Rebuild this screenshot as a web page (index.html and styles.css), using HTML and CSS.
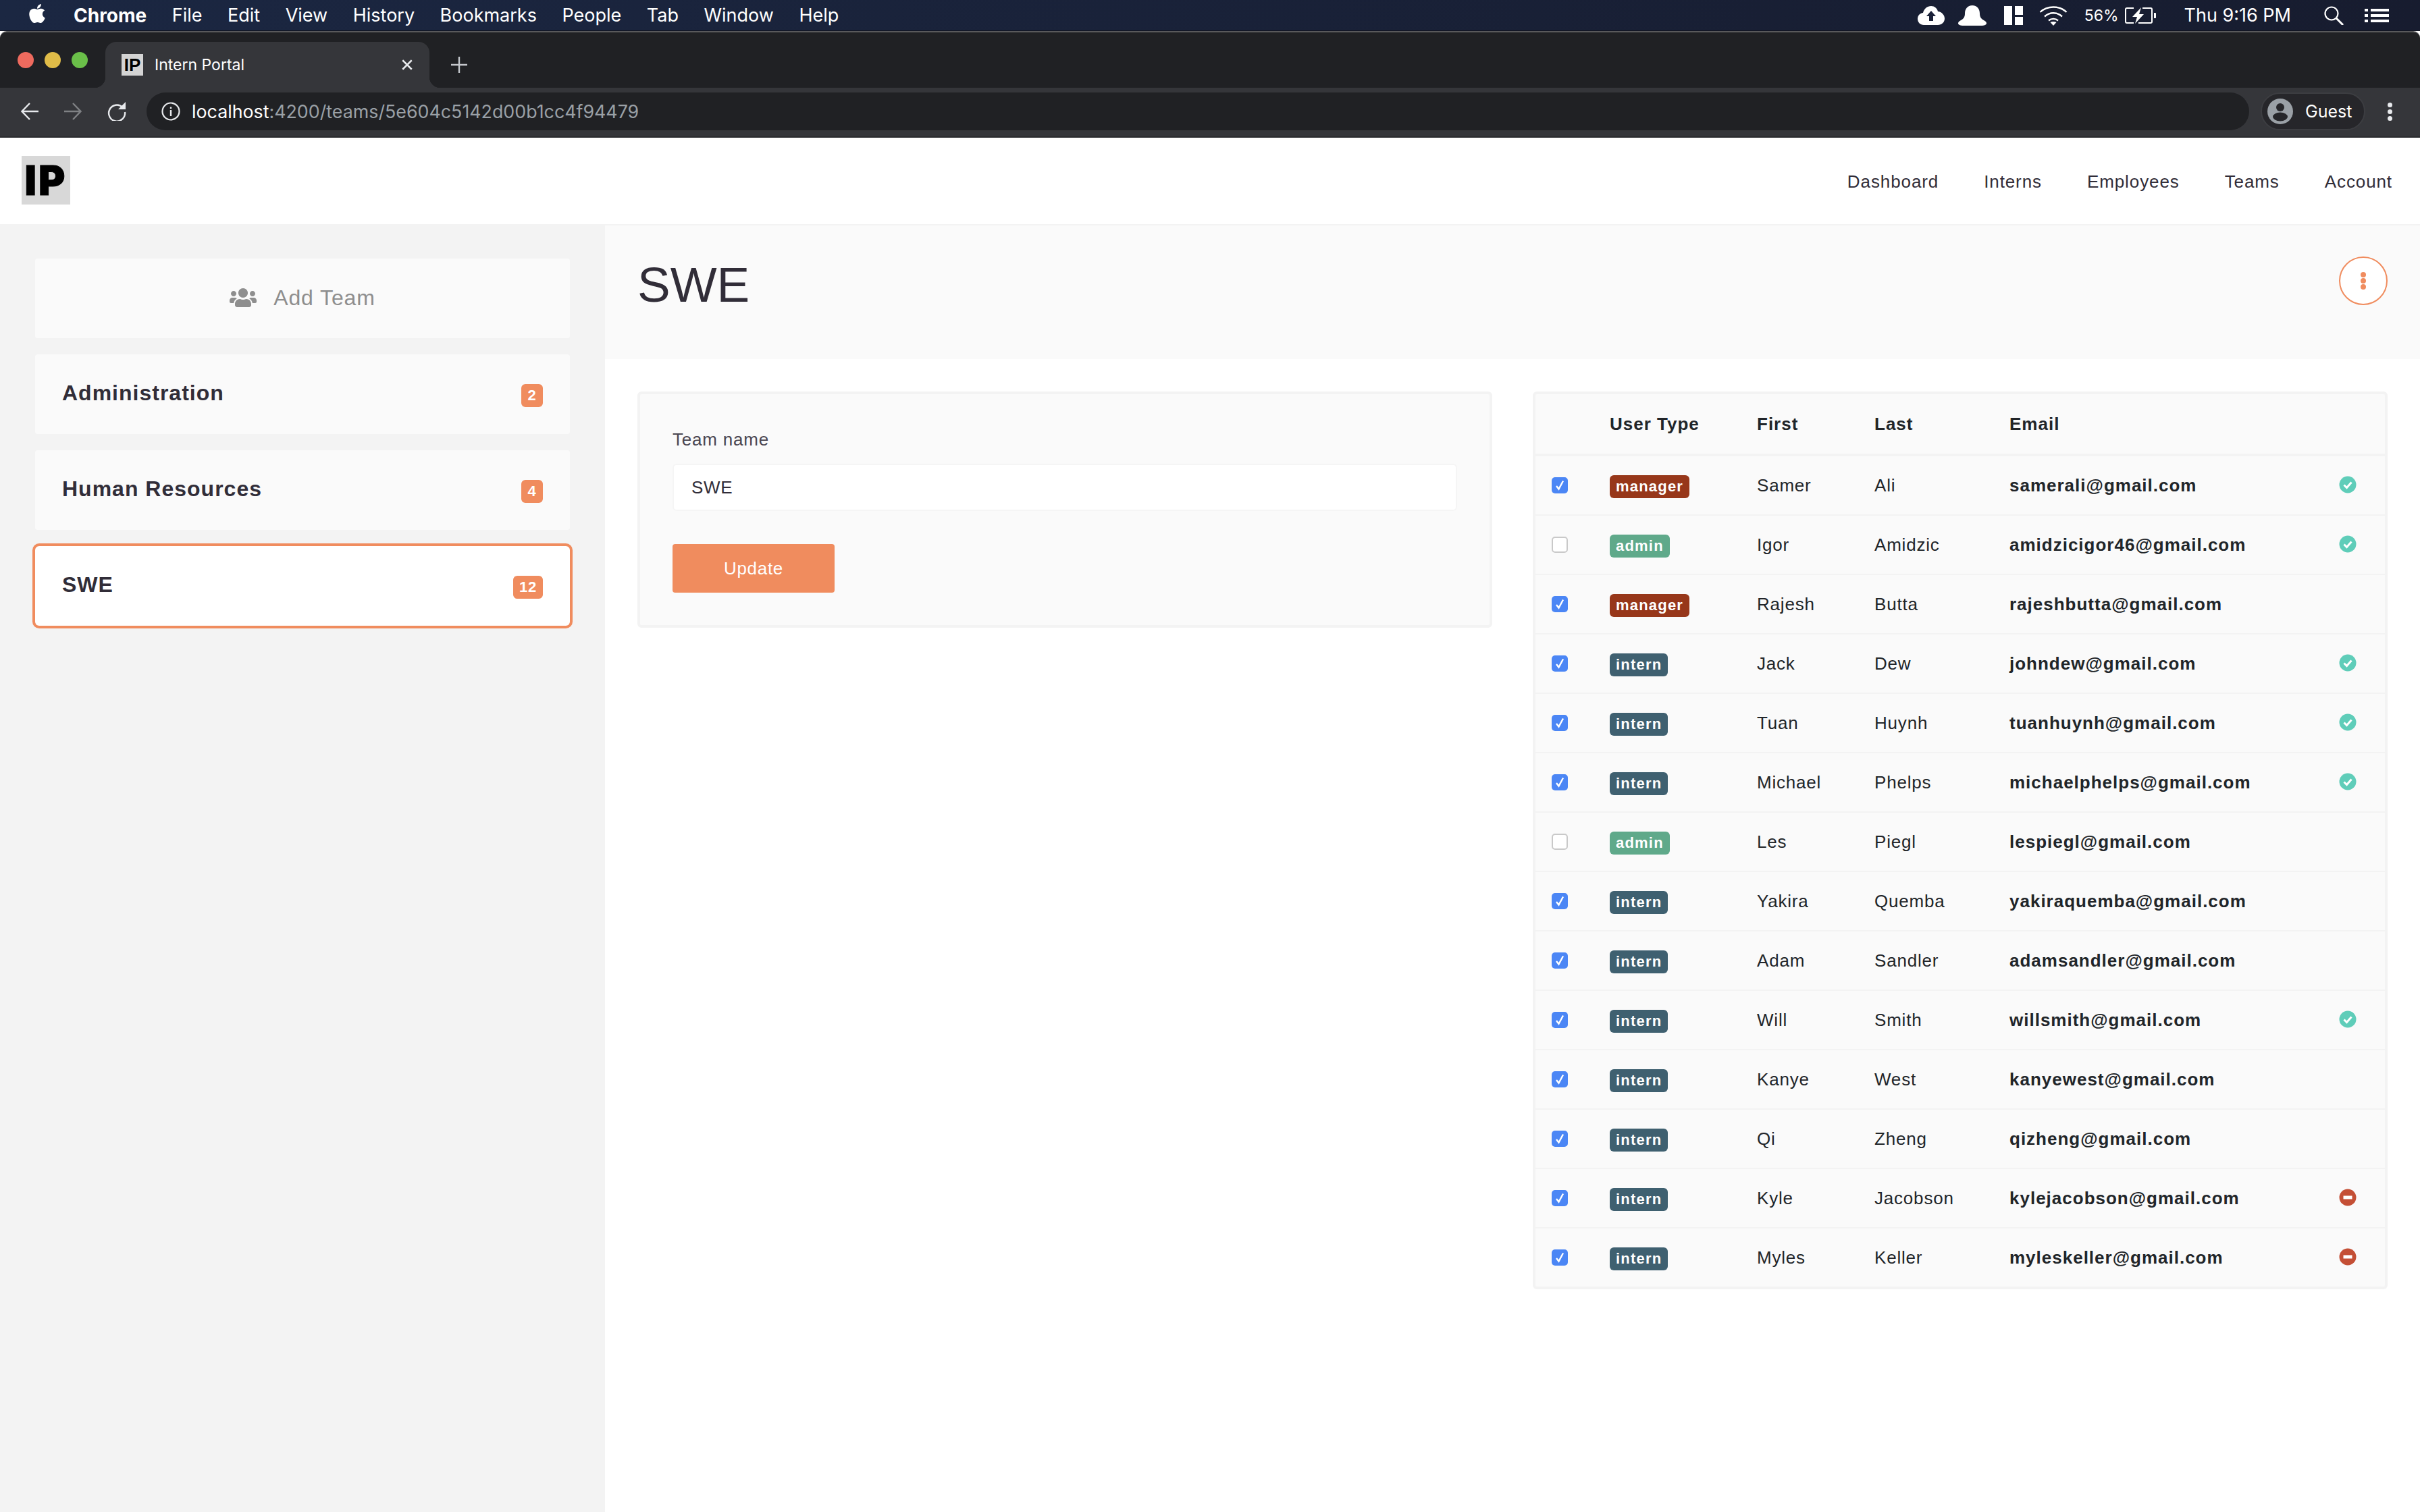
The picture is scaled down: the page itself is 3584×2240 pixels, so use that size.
FILE: index.html
```html
<!DOCTYPE html>
<html lang="en">
<head>
    <meta charset="UTF-8">
    <meta name="viewport" content="width=device-width, initial-scale=1.0">
    <title>Intern Portal</title>
    <link rel="stylesheet" href="styles.css">
</head>
<body>
    <svg class="defs" width="0" height="0">
        <symbol id="tick" viewBox="0 0 24 24"><path d="M7 13l3.5 4.5L17 5.5" fill="none" stroke="#fff" stroke-width="2.4"/></symbol>
        <symbol id="ok" viewBox="0 0 26 26"><circle cx="13" cy="13" r="12.5" fill="#5fcdb9"/><path d="M7.5 13.5l4 4 7-8" fill="none" stroke="#fff" stroke-width="3"/></symbol>
        <symbol id="no" viewBox="0 0 26 26"><circle cx="13" cy="13" r="12.5" fill="#c44f35"/><rect x="6.5" y="10.5" width="13" height="5" fill="#fff"/></symbol>
    </svg>

    <!-- mac menu bar -->
    <div class="menubar">
        <svg class="apple" viewBox="0 0 384 512" width="26" height="32"><path fill="#fff" d="M318.7 268.7c-.2-36.7 16.4-64.4 50-84.8-18.8-26.9-47.2-41.7-84.7-44.6-35.5-2.8-74.3 20.7-88.5 20.7-15 0-49.4-19.7-76.4-19.7C63.3 141.2 4 184.8 4 273.5q0 39.3 14.4 81.2c12.8 36.7 59 126.7 107.2 125.2 25.2-.6 43-17.9 75.8-17.9 31.8 0 48.3 17.9 76.4 17.9 48.6-.7 90.4-82.5 102.6-119.3-65.2-30.7-61.7-90-61.7-91.9zm-56.6-164.2c27.3-32.4 24.8-61.9 24-72.5-24.1 1.4-52 16.4-67.9 34.9-17.5 19.8-27.8 44.3-25.6 71.9 26.1 2 49.9-11.4 69.5-34.3z"/></svg>
        <nav class="menu">
            <b>Chrome</b><span>File</span><span>Edit</span><span>View</span><span>History</span><span>Bookmarks</span><span>People</span><span>Tab</span><span>Window</span><span>Help</span>
        </nav>
        <div class="status">
            <svg class="st-cloud" viewBox="0 0 40 28" width="40" height="28"><path fill="#fff" d="M20 0c5 0 9 3.500 10 8 5.500 .5 10 5 10 10.500S35.500 28 30 28H9C4 28 0 24 0 19s3.500-8.500 8-9C9.500 4 14 0 20 0z"/><path fill="#1a2138" d="M20 7l7 8h-4v7h-6v-7h-4z"/></svg>
            <svg class="st-bell" viewBox="0 0 42 30" width="42" height="30"><path fill="#fff" d="M21 0c7 0 11 5 11 12 0 5 2 8 6 10 3 1.500 4 3 4 4.500 0 2-3 3.500-8 3.500H8c-5 0-8-1.500-8-3.500 0-1.500 1-3 4-4.500 4-2 6-5 6-10C10 5 14 0 21 0z"/></svg>
            <svg class="st-dash" viewBox="0 0 28 28" width="28" height="28"><path fill="#fff" d="M0 0h12v28H0zM16 0h12v13H16zM16 16h12v12H16z"/></svg>
            <svg class="st-wifi" viewBox="0 0 42 30" width="42" height="30" fill="none" stroke="#fff" stroke-width="2.400"><path d="M1.500 10C12 0 30 0 40.500 10"/><path d="M8 16.500c7.500-7 18.500-7 26 0"/><path d="M14 22.500c4-3.500 10-3.500 14 0"/><path fill="#fff" stroke="none" d="M21 30l-4.500-5c2.500-1.500 6.500-1.500 9 0z"/></svg>
            <span class="st-pct">56%</span>
            <svg class="st-batt" viewBox="0 0 46 24" width="46" height="24"><path fill="none" stroke="#fff" stroke-width="2" d="M13 1H3Q1 1 1 3v18q0 2 2 2h10M26 1h12q2 0 2 2v18q0 2-2 2H20"/><path fill="#fff" d="M24 0L11 14h7l-3 10 13-14h-7zM43 8h2a1 1 0 0 1 1 1v6a1 1 0 0 1-1 1h-2z"/></svg>
            <span class="st-time">Thu 9:16 PM</span>
            <svg class="st-search" viewBox="0 0 30 28" width="30" height="28" fill="none" stroke="#fff" stroke-width="2.200"><circle cx="11" cy="11" r="9.500"/><path stroke-width="3" d="M18 18l10 10"/></svg>
            <svg class="st-list" viewBox="0 0 36 20" width="36" height="20"><path fill="#fff" d="M0 0h5v4H0zM9 0h27v4H9zM0 8h5v4H0zM9 8h27v4H9zM0 16h5v4H0zM9 16h27v4H9z"/></svg>
        </div>
    </div>

    <!-- browser chrome -->
    <div class="tabstrip">
        <div class="lights"><i class="red"></i><i class="yellow"></i><i class="green"></i></div>
        <div class="tab">
            <span class="favicon">IP</span>
            <span class="tab-title">Intern Portal</span>
            <svg class="tab-close" viewBox="0 0 16 16" width="18" height="18"><path d="M2 2l12 12M14 2L2 14" stroke="#e8eaed" stroke-width="2.200"/></svg>
        </div>
        <svg class="tab-new" viewBox="0 0 24 24" width="24" height="24"><path d="M12 0v24M0 12h24" stroke="#c4c7cc" stroke-width="2.400"/></svg>
    </div>
    <div class="toolbar">
        <svg class="tb-back" viewBox="0 0 26 26" width="26" height="26" fill="none" stroke="#e8eaed" stroke-width="2.400"><path d="M26 13H2M13 1L1.500 13 13 25"/></svg>
        <svg class="tb-fwd" viewBox="0 0 26 26" width="26" height="26" fill="none" stroke="#7f8184" stroke-width="2.400"><path d="M0 13h24M13 1l11.500 12L13 25"/></svg>
        <svg class="tb-reload" viewBox="0 0 28 28" width="28" height="28"><path fill="none" stroke="#e8eaed" stroke-width="2.400" d="M22.500 8A12 12 0 1 0 26 15"/><path fill="#e8eaed" d="M27 0v11H16z"/></svg>
        <div class="urlbar">
            <svg viewBox="0 0 28 28" width="28" height="28"><circle cx="14" cy="14" r="12.500" fill="none" stroke="#e8eaed" stroke-width="2.200"/><path fill="#e8eaed" d="M12.800 12h2.400v9h-2.400zM12.800 7.500h2.400V10h-2.400z"/></svg>
            <span class="url"><span class="host">localhost</span>:4200/teams/5e604c5142d00b1cc4f94479</span>
        </div>
        <div class="guest">
            <svg viewBox="0 0 38 38" width="38" height="38"><circle cx="19" cy="19" r="19" fill="#9aa0a6"/><circle cx="19" cy="13" r="6" fill="#26262a"/><ellipse cx="19" cy="27" rx="11" ry="6.500" fill="#26262a"/></svg>
            <span>Guest</span>
        </div>
        <div class="kebab"><i></i><i></i><i></i></div>
    </div>

    <!-- app -->
    <header class="topnav">
        <div class="logo">IP</div>
        <nav class="links">
            <a>Dashboard</a><a>Interns</a><a>Employees</a><a>Teams</a><a>Account</a>
        </nav>
    </header>

    <div class="layout">
        <aside class="sidebar">
            <div class="team add">
                <svg viewBox="0 0 640 512" width="40" height="32"><path fill="#8e8e8e" d="M96 224c35.300 0 64-28.700 64-64s-28.700-64-64-64-64 28.700-64 64 28.700 64 64 64zm448 0c35.300 0 64-28.700 64-64s-28.700-64-64-64-64 28.700-64 64 28.700 64 64 64zm32 32h-64c-17.600 0-33.500 7.100-45.100 18.600 40.300 22.100 68.900 62 75.100 109.400h66c17.700 0 32-14.300 32-32v-32c0-35.300-28.700-64-64-64zm-256 0c61.900 0 112-50.100 112-112S381.900 32 320 32 208 82.100 208 144s50.100 112 112 112zm76.800 32h-8.300c-20.800 10-43.900 16-68.500 16s-47.600-6-68.500-16h-8.300C179.600 288 128 339.600 128 403.200V432c0 26.500 21.500 48 48 48h288c26.500 0 48-21.500 48-48v-28.800c0-63.600-51.600-115.200-115.200-115.200zm-223.700-13.400C161.500 263.100 145.600 256 128 256H64c-35.300 0-64 28.700-64 64v32c0 17.700 14.300 32 32 32h65.900c6.300-47.400 34.900-87.300 75.200-109.400z"/></svg>
                <span>Add Team</span>
            </div>
            <div class="team"><strong>Administration</strong><span class="count">2</span></div>
            <div class="team"><strong>Human Resources</strong><span class="count">4</span></div>
            <div class="team active"><strong>SWE</strong><span class="count">12</span></div>
        </aside>

        <main class="content">
            <div class="titlebar">
                <h1>SWE</h1>
                <button class="more" type="button"><i></i><i></i><i></i></button>
            </div>
            <div class="columns">
                <form class="panel form-panel">
                    <label for="teamName">Team name</label>
                    <input type="text" id="teamName" value="SWE">
                    <button class="update" type="button">Update</button>
                </form>

                <div class="panel table-panel">
                    <table>
                        <colgroup><col class="c-check"><col class="c-type"><col class="c-first"><col class="c-last"><col class="c-email"><col></colgroup>
                        <thead>
                            <tr><th></th><th>User Type</th><th>First</th><th>Last</th><th>Email</th><th></th></tr>
                        </thead>
                        <tbody>
                            <tr><td><span class="check on"><svg><use href="#tick"/></svg></span></td><td><span class="tag manager">manager</span></td><td>Samer</td><td>Ali</td><td class="email">samerali@gmail.com</td><td><svg class="state"><use href="#ok"/></svg></td></tr>
                            <tr><td><span class="check"></span></td><td><span class="tag admin">admin</span></td><td>Igor</td><td>Amidzic</td><td class="email">amidzicigor46@gmail.com</td><td><svg class="state"><use href="#ok"/></svg></td></tr>
                            <tr><td><span class="check on"><svg><use href="#tick"/></svg></span></td><td><span class="tag manager">manager</span></td><td>Rajesh</td><td>Butta</td><td class="email">rajeshbutta@gmail.com</td><td></td></tr>
                            <tr><td><span class="check on"><svg><use href="#tick"/></svg></span></td><td><span class="tag intern">intern</span></td><td>Jack</td><td>Dew</td><td class="email">johndew@gmail.com</td><td><svg class="state"><use href="#ok"/></svg></td></tr>
                            <tr><td><span class="check on"><svg><use href="#tick"/></svg></span></td><td><span class="tag intern">intern</span></td><td>Tuan</td><td>Huynh</td><td class="email">tuanhuynh@gmail.com</td><td><svg class="state"><use href="#ok"/></svg></td></tr>
                            <tr><td><span class="check on"><svg><use href="#tick"/></svg></span></td><td><span class="tag intern">intern</span></td><td>Michael</td><td>Phelps</td><td class="email">michaelphelps@gmail.com</td><td><svg class="state"><use href="#ok"/></svg></td></tr>
                            <tr><td><span class="check"></span></td><td><span class="tag admin">admin</span></td><td>Les</td><td>Piegl</td><td class="email">lespiegl@gmail.com</td><td></td></tr>
                            <tr><td><span class="check on"><svg><use href="#tick"/></svg></span></td><td><span class="tag intern">intern</span></td><td>Yakira</td><td>Quemba</td><td class="email">yakiraquemba@gmail.com</td><td></td></tr>
                            <tr><td><span class="check on"><svg><use href="#tick"/></svg></span></td><td><span class="tag intern">intern</span></td><td>Adam</td><td>Sandler</td><td class="email">adamsandler@gmail.com</td><td></td></tr>
                            <tr><td><span class="check on"><svg><use href="#tick"/></svg></span></td><td><span class="tag intern">intern</span></td><td>Will</td><td>Smith</td><td class="email">willsmith@gmail.com</td><td><svg class="state"><use href="#ok"/></svg></td></tr>
                            <tr><td><span class="check on"><svg><use href="#tick"/></svg></span></td><td><span class="tag intern">intern</span></td><td>Kanye</td><td>West</td><td class="email">kanyewest@gmail.com</td><td></td></tr>
                            <tr><td><span class="check on"><svg><use href="#tick"/></svg></span></td><td><span class="tag intern">intern</span></td><td>Qi</td><td>Zheng</td><td class="email">qizheng@gmail.com</td><td></td></tr>
                            <tr><td><span class="check on"><svg><use href="#tick"/></svg></span></td><td><span class="tag intern">intern</span></td><td>Kyle</td><td>Jacobson</td><td class="email">kylejacobson@gmail.com</td><td><svg class="state"><use href="#no"/></svg></td></tr>
                            <tr><td><span class="check on"><svg><use href="#tick"/></svg></span></td><td><span class="tag intern">intern</span></td><td>Myles</td><td>Keller</td><td class="email">myleskeller@gmail.com</td><td><svg class="state"><use href="#no"/></svg></td></tr>
                        </tbody>
                    </table>
                </div>
            </div>
        </main>
    </div>
</body>
</html>
```

FILE: styles.css
```css
* {
    box-sizing: border-box;
}
html, body {
    height: 100%;
}
body {
    margin: 0;
    display: flex;
    flex-direction: column;
    overflow: hidden;
    font-family: "Liberation Sans", Arial, sans-serif;
    font-size: 26px;
    letter-spacing: 0.8px;
    color: #312d38;
    background: #fff;
}
.defs {
    position: absolute;
}

/* mac menu bar */
.menubar {
    flex: none;
    height: 46px;
    display: flex;
    align-items: center;
    padding-left: 42px;
    background: linear-gradient(90deg, #1b2742, #171c2f);
    border-bottom: 1px solid #10131f;
    color: #fff;
    font-family: Inter, sans-serif;
    font-size: 27px;
    letter-spacing: 0;
}
.apple {
    margin-top: -6px;
}
.menu {
    display: flex;
    gap: 37.5px;
    margin-left: 41px;
}
.menu b {
    font-size: 28px;
}
.status {
    display: flex;
    align-items: center;
    margin-left: auto;
    padding-right: 46px;
}
.st-bell { margin-left: 20px; }
.st-dash { margin-left: 26px; }
.st-wifi { margin-left: 24px; }
.st-pct { margin-left: 25px; font-size: 23px; }
.st-batt { margin-left: 9px; }
.st-time { margin-left: 42px; }
.st-search { margin-left: 49px; }
.st-list { margin-left: 30px; }

/* browser chrome */
.tabstrip {
    flex: none;
    height: 84px;
    display: flex;
    align-items: flex-end;
    position: relative;
    background: #202124;
    border-top: 2px solid #59595b;
    border-radius: 10px 10px 0 0;
    color: #fff;
    font-family: Inter, sans-serif;
    letter-spacing: 0;
}
.lights {
    display: flex;
    gap: 16px;
    width: 156px;
    height: 82px;
    padding: 29px 0 0 26px;
}
.lights i {
    width: 24px;
    height: 24px;
    border-radius: 50%;
}
.red { background: #ee6a5e; }
.yellow { background: #e0bc48; }
.green { background: #6abf49; }
.tab {
    width: 480px;
    height: 68px;
    display: flex;
    align-items: center;
    padding: 0 24px;
    position: relative;
    background: #35363a;
    border-radius: 16px 16px 0 0;
}
.tab::before, .tab::after {
    content: "";
    position: absolute;
    bottom: 0;
    width: 16px;
    height: 16px;
}
.tab::before {
    left: -16px;
    background: radial-gradient(circle at 0 0, transparent 16px, #35363a 16.500px);
}
.tab::after {
    right: -16px;
    background: radial-gradient(circle at 100% 0, transparent 16px, #35363a 16.500px);
}
.favicon {
    width: 32px;
    height: 32px;
    background: #d4d4d4;
    color: #000;
    font-family: "Liberation Sans", sans-serif;
    font-size: 26px;
    font-weight: bold;
    line-height: 32px;
    text-align: center;
    overflow: hidden;
}
.tab-title {
    margin-left: 17px;
    font-size: 23px;
}
.tab-close {
    margin-left: auto;
}
.tab-new {
    margin: 0 0 22px 32px;
}
.toolbar {
    flex: none;
    height: 74px;
    display: flex;
    align-items: center;
    padding: 0 41px 2px 31px;
    background: #35363a;
    border-bottom: 2px solid #2a2b2e;
    color: #fff;
    font-family: Inter, sans-serif;
    letter-spacing: 0;
}
.tb-fwd { margin-left: 38px; }
.tb-reload { margin-left: 38px; }
.urlbar {
    width: 1115px;
    flex: 1;
    height: 56px;
    display: flex;
    align-items: center;
    margin-left: 30px;
    padding-left: 22px;
    background: #202124;
    border-radius: 28px;
    font-size: 26.800px;
    color: #9aa0a6;
}
.url {
    margin-left: 17px;
}
.host {
    color: #fff;
}
.guest {
    width: 155px;
    height: 56px;
    display: flex;
    align-items: center;
    gap: 18px;
    margin-left: 17px;
    padding-left: 8px;
    background: #26262a;
    border: 2px solid #3c3d41;
    border-radius: 28px;
    font-size: 25px;
}
.kebab {
    display: flex;
    flex-direction: column;
    gap: 3px;
    margin-left: 33px;
}
.kebab i {
    width: 7px;
    height: 7px;
    border-radius: 50%;
    background: #e8eaed;
}

/* app header */
.topnav {
    flex: none;
    height: 130px;
    display: flex;
    align-items: center;
    justify-content: space-between;
    padding: 0 41px 2px 32px;
    border-bottom: 2px solid #f3f3f3;
}
.logo {
    width: 72px;
    height: 72px;
    background: #d8d8d8;
    color: #000;
    font-family: Inter, "Liberation Sans", sans-serif;
    font-size: 60px;
    font-weight: 900;
    line-height: 72px;
    letter-spacing: 3px;
    text-align: center;
    -webkit-text-stroke: 1px #000;
}
.links {
    display: flex;
    gap: 67px;
    padding-top: 4px;
    letter-spacing: 0.9px;
}

.layout {
    flex: 1;
    display: grid;
    grid-template-columns: 896px 1fr;
    min-height: 0;
}

/* team list */
.sidebar {
    display: flex;
    flex-direction: column;
    gap: 24px;
    padding: 49px 52px 0;
    background: #f3f3f3;
}
.team {
    height: 118px;
    display: flex;
    align-items: center;
    justify-content: space-between;
    padding: 0 40px;
    background: #fafafa;
    border-radius: 4px;
}
.team strong {
    margin-bottom: 4px;
    font-size: 32px;
    letter-spacing: 1px;
}
.team.add {
    justify-content: center;
    gap: 25px;
    padding-bottom: 2px;
    font-size: 32px;
    letter-spacing: 0.9px;
    color: #8e8e8e;
}
.team.active {
    background: #fff;
    border-radius: 6px;
    box-shadow: 0 0 0 4px #f08c5e;
}
.count {
    min-width: 32px;
    height: 34px;
    margin-top: 4px;
    padding: 0 9px;
    background: #f08c5e;
    border-radius: 6px;
    color: #fff;
    font-size: 22px;
    font-weight: bold;
    line-height: 34px;
    text-align: center;
}

/* main */
.titlebar {
    height: 198px;
    display: flex;
    align-items: flex-start;
    justify-content: space-between;
    padding: 46px 48px 0;
    background: #fafafa;
}
.titlebar h1 {
    margin: 0;
    font-size: 73px;
    font-weight: normal;
    line-height: 84px;
    letter-spacing: 0;
}
.more {
    width: 72px;
    height: 72px;
    display: flex;
    flex-direction: column;
    align-items: center;
    justify-content: center;
    gap: 1px;
    padding: 0;
    background: #fff;
    border: 2px solid #f08c5e;
    border-radius: 50%;
}
.more i {
    width: 8px;
    height: 8px;
    border-radius: 50%;
    background: #f08c5e;
}
.columns {
    display: grid;
    grid-template-columns: 1fr 1fr;
    gap: 60px;
    align-items: start;
    padding: 48px;
}
.panel {
    background: #fafafa;
    border: 4px solid #f3f3f3;
    border-radius: 6px;
}

/* form */
.form-panel {
    padding: 52px 48px 48px;
}
.form-panel label {
    display: block;
    margin-bottom: 21px;
    line-height: 30px;
    color: #4a4650;
}
.form-panel input {
    display: block;
    width: 100%;
    height: 70px;
    padding: 0 26px;
    background: #fff;
    border: 2px solid #f5f5f5;
    border-radius: 6px;
    font: inherit;
    letter-spacing: 0.7px;
    color: #312d38;
    outline: none;
}
.update {
    display: block;
    width: 240px;
    height: 72px;
    margin-top: 49px;
    background: #f08c5e;
    border: none;
    border-radius: 4px;
    color: #fff;
    font: inherit;
    letter-spacing: 0.7px;
}

/* members table */
table {
    width: 100%;
    table-layout: fixed;
    border-collapse: separate;
    border-spacing: 0;
    color: #212529;
}
.c-check { width: 110px; }
.c-type { width: 218px; }
.c-first { width: 174px; }
.c-last { width: 200px; }
.c-email { width: 464px; }
th {
    height: 92px;
    padding: 0;
    border-bottom: 4px solid #f3f3f3;
    text-align: left;
    letter-spacing: 1px;
}
td {
    height: 88px;
    padding: 0;
    border-bottom: 2px solid #f3f3f3;
    vertical-align: middle;
}
tbody tr:last-child td {
    height: 86px;
    border-bottom: none;
}
.email {
    font-weight: bold;
    letter-spacing: 1px;
}
.check {
    display: block;
    width: 24px;
    height: 24px;
    margin-left: 24px;
    background: #fff;
    border: 2px solid #c9c9c9;
    border-radius: 5px;
}
.check.on {
    background: #4b86f5;
    border: none;
}
.check svg {
    display: block;
    width: 24px;
    height: 24px;
}
.tag {
    display: inline-block;
    height: 34px;
    margin-top: 4px;
    padding: 0 9px;
    border-radius: 6px;
    color: #fff;
    font-size: 22px;
    font-weight: bold;
    letter-spacing: 1.2px;
    line-height: 33px;
    vertical-align: middle;
}
.manager { background: #97371a; }
.admin { background: #5fa98a; }
.intern { background: #3f6070; }
.state {
    display: block;
    width: 26px;
    height: 26px;
    margin: -2px 0 0 24px;
}
```
